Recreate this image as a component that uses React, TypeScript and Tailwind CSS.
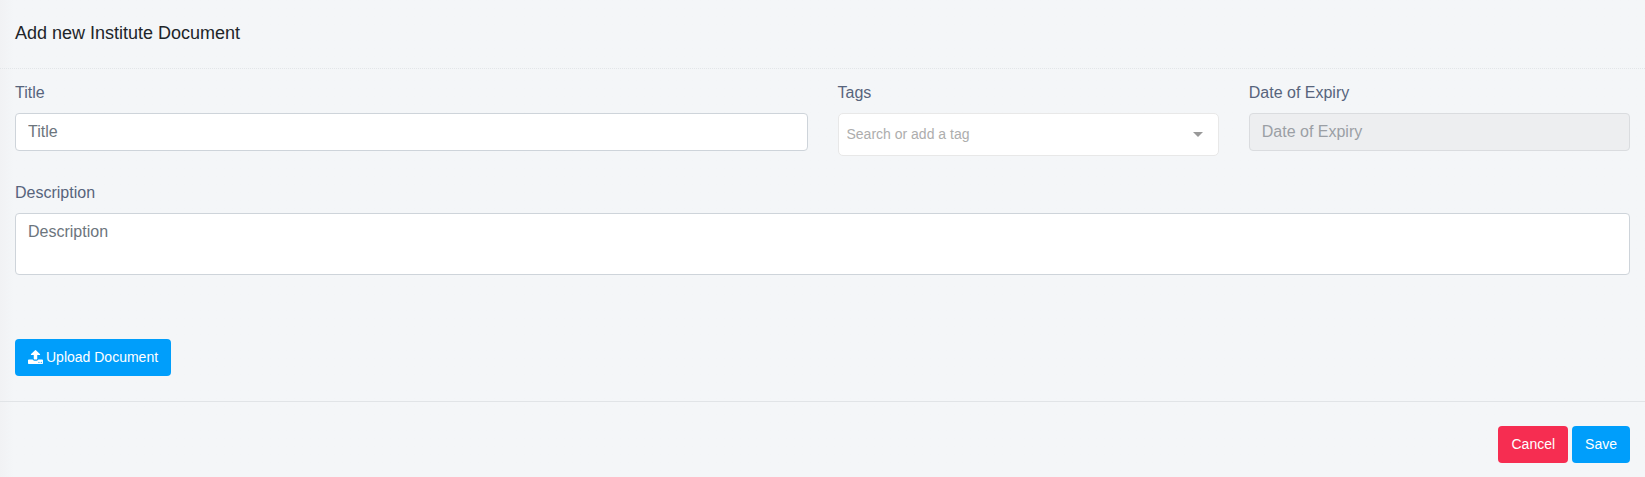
import { useState } from "react";

const labelClass = "mb-2 block text-base text-[#57647c]";
const inputClass =
  "block w-full rounded-[4px] border border-[#ced4da] bg-white px-3 text-base text-[#495057] placeholder:text-[#6c757d]";
const buttonClass =
  "h-[37px] cursor-pointer rounded-[4px] px-[13px] pb-[2px] text-sm text-white";

function UploadIcon() {
  return (
    <svg
      className="h-[14px] w-[15px]"
      viewBox="64 64 1664 1600"
      preserveAspectRatio="none"
      fill="currentColor"
      aria-hidden="true"
    >
      <path d="M1344 1472q0-26-19-45t-45-19-45 19-19 45 19 45 45 19 45-19 19-45zm256 0q0-26-19-45t-45-19-45 19-19 45 19 45 45 19 45-19 19-45zm128-224v320q0 40-28 68t-68 28h-1472q-40 0-68-28t-28-68v-320q0-40 28-68t68-28h427q21 56 70.5 92t110.5 36h256q61 0 110.5-36t70.5-92h427q40 0 68 28t28 68zm-325-648q-17 40-59 40h-256v448q0 26-19 45t-45 19h-256q-26 0-45-19t-19-45v-448h-256q-42 0-59-40-17-39 14-69l448-448q18-19 45-19t45 19l448 448q31 30 14 69z" />
    </svg>
  );
}

export default function App() {
  const [title, setTitle] = useState("");
  const [tag, setTag] = useState("");
  const [description, setDescription] = useState("");

  return (
    <form
      className="min-h-screen bg-[#f4f6f8] bg-linear-to-r from-[#f1f2f4] to-[#f4f6f8] to-[14px] font-['Liberation_Sans',Arial,sans-serif]"
      onSubmit={(e) => e.preventDefault()}
    >
      <header className="border-b border-dotted border-[#e2e5e8] px-[15px] pt-[19px] pb-[21px]">
        <h1 className="text-lg text-[#212529]">Add new Institute Document</h1>
      </header>

      <div className="px-[15px] pt-3 pb-[25px]">
        <div className="grid grid-cols-4 items-start gap-x-[30px]">
          <div className="col-span-2">
            <label htmlFor="title" className={labelClass}>
              Title
            </label>
            <input
              id="title"
              type="text"
              placeholder="Title"
              className={`${inputClass} h-[38px]`}
              value={title}
              onChange={(e) => setTitle(e.target.value)}
            />
          </div>

          <div>
            <label htmlFor="tags" className={labelClass}>
              Tags
            </label>
            <div className="flex h-[43px] items-center rounded-[5px] border border-[#e8e8e8] bg-white pr-[15px] pl-2">
              <input
                id="tags"
                type="text"
                placeholder="Search or add a tag"
                className="min-w-0 flex-1 pb-[2px] text-sm text-[#35495e] outline-none placeholder:text-[#adadad]"
                value={tag}
                onChange={(e) => setTag(e.target.value)}
              />
              <svg
                className="h-[5px] w-[10px] text-[#999999]"
                viewBox="0 0 10 5"
                fill="currentColor"
                aria-hidden="true"
              >
                <path d="M0 0h10L5 5z" />
              </svg>
            </div>
          </div>

          <div>
            <label htmlFor="expiry" className={labelClass}>
              Date of Expiry
            </label>
            <input
              id="expiry"
              type="text"
              placeholder="Date of Expiry"
              className="block h-[38px] w-full rounded-[4px] border border-[#dadcdf] bg-[#edeef0] px-3 text-base placeholder:text-[#9b9fa5]"
              disabled
            />
          </div>
        </div>

        <div className="mt-[25px]">
          <label htmlFor="description" className={labelClass}>
            Description
          </label>
          <textarea
            id="description"
            placeholder="Description"
            className={`${inputClass} h-[62px] resize-none py-[6px]`}
            value={description}
            onChange={(e) => setDescription(e.target.value)}
          />
        </div>

        <button
          type="button"
          className={`${buttonClass} mt-16 flex items-center gap-[3px] bg-[#009efb]`}
        >
          <UploadIcon />
          Upload Document
        </button>
      </div>

      <footer className="flex justify-end gap-1 border-t border-[#e1e4e7] px-[15px] pt-6 pb-[14px]">
        <button type="button" className={`${buttonClass} bg-[#f62d51]`}>
          Cancel
        </button>
        <button type="submit" className={`${buttonClass} bg-[#009efb]`}>
          Save
        </button>
      </footer>
    </form>
  );
}
